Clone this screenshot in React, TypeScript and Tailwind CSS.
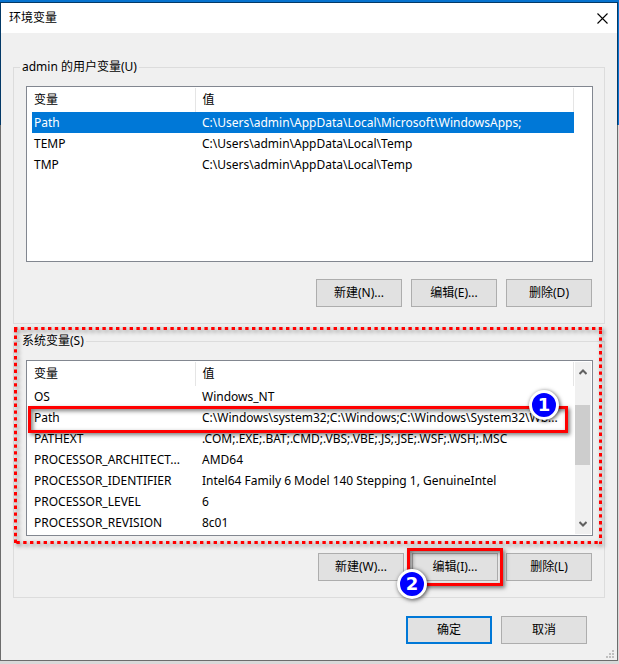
import React from "react";
import clsx from "clsx";

interface EnvVariable {
  name: string;
  value: string;
}

const userVariables: EnvVariable[] = [
  {
    name: "Path",
    value: "C:\\Users\\admin\\AppData\\Local\\Microsoft\\WindowsApps;",
  },
  { name: "TEMP", value: "C:\\Users\\admin\\AppData\\Local\\Temp" },
  { name: "TMP", value: "C:\\Users\\admin\\AppData\\Local\\Temp" },
];

const systemVariables: EnvVariable[] = [
  { name: "OS", value: "Windows_NT" },
  {
    name: "Path",
    value: "C:\\Windows\\system32;C:\\Windows;C:\\Windows\\System32\\Wb...",
  },
  {
    name: "PATHEXT",
    value: ".COM;.EXE;.BAT;.CMD;.VBS;.VBE;.JS;.JSE;.WSF;.WSH;.MSC",
  },
  { name: "PROCESSOR_ARCHITECT...", value: "AMD64" },
  {
    name: "PROCESSOR_IDENTIFIER",
    value: "Intel64 Family 6 Model 140 Stepping 1, GenuineIntel",
  },
  { name: "PROCESSOR_LEVEL", value: "6" },
  { name: "PROCESSOR_REVISION", value: "8c01" },
];

interface DialogButtonProps {
  children: React.ReactNode;
  primary?: boolean;
}

const DialogButton: React.FC<DialogButtonProps> = ({ children, primary }) => (
  <button
    type="button"
    className={clsx(
      "flex h-7 w-[86px] items-center justify-center bg-[#e1e1e1]",
      primary ? "border-2 border-[#0078d7]" : "border border-[#adadad]"
    )}
  >
    {children}
  </button>
);

interface VariableTableProps {
  label: string;
  variables: EnvVariable[];
  selected?: number;
}

const VariableTable: React.FC<VariableTableProps> = ({
  label,
  variables,
  selected,
}) => (
  <table aria-label={label} className="w-full table-fixed border-collapse">
    <colgroup>
      <col className="w-[163px]" />
      <col />
    </colgroup>
    <thead>
      <tr className="h-6 text-left">
        <th className="border-r border-[#e5e5e5] p-0 pl-0.5 font-normal">变量</th>
        <th className="border-r border-[#e5e5e5] p-0 pl-[7px] font-normal">值</th>
      </tr>
    </thead>
    <tbody>
      {variables.map((variable, index) => (
        <tr
          key={variable.name}
          className={clsx(
            "h-[21px]",
            index === selected && "bg-[#0078d7] text-white"
          )}
        >
          <td className="p-0 pl-0.5 whitespace-nowrap">{variable.name}</td>
          <td className="p-0 pl-[7px] whitespace-nowrap">{variable.value}</td>
        </tr>
      ))}
    </tbody>
  </table>
);

const ScrollBar: React.FC = () => (
  <div className="mx-px flex w-4 shrink-0 flex-col bg-[#f0f0f0]">
    <button type="button" aria-label="向上滚动" className="flex h-5 items-center justify-center">
      <svg viewBox="0 0 8 6" className="h-1.5 w-2" fill="none" stroke="#606060" strokeWidth="2">
        <path d="M0.5 5 4 1.5 7.500 5" />
      </svg>
    </button>
    <div className="mt-[23px] mr-px h-[60px] bg-[#cdcdcd]" />
    <button type="button" aria-label="向下滚动" className="mt-auto flex h-5 items-center justify-center">
      <svg viewBox="0 0 8 6" className="h-1.5 w-2" fill="none" stroke="#606060" strokeWidth="2">
        <path d="M0.5 1 4 4.500 7.500 1" />
      </svg>
    </button>
  </div>
);

interface StepBadgeProps {
  step: number;
  className: string;
}

const StepBadge: React.FC<StepBadgeProps> = ({ step, className }) => (
  <span
    className={clsx(
      "absolute flex size-[30px] items-center justify-center rounded-full border-3 border-white bg-[#0000ff] font-['DejaVu_Sans',sans-serif] text-lg leading-none font-bold text-white shadow-[1px_1px_4px_rgba(0,0,0,0.7)]",
      className
    )}
  >
    {step}
  </span>
);

// Red frame drawn over the control a step refers to
const highlightClass =
  "pointer-events-none absolute border-3 border-[#ff0000] shadow-[2px_2px_4px_rgba(0,0,0,0.5),inset_2px_2px_4px_rgba(0,0,0,0.5)]";

interface VariableGroupProps {
  title: string;
  children: React.ReactNode;
}

const VariableGroup: React.FC<VariableGroupProps> = ({ title, children }) => (
  <fieldset className="border border-[#dcdcdc]">
    <legend className="ml-1.5 px-0.5 leading-4">{title}</legend>
    <div className="pt-[11px] pr-[11px] pb-4 pl-3">{children}</div>
  </fieldset>
);

const App: React.FC = () => {
  return (
    <div className="min-h-screen bg-[linear-gradient(#0673cf_125px,#d9d9d9_125px)] pt-0.5 pr-px pb-[3px] font-['Noto_Sans','Noto_Sans_CJK_SC',sans-serif] text-xs text-black">
      <div className="relative border border-black/50 bg-[#f0f0f0] bg-clip-padding">
        <header className="flex h-[30px] items-center justify-between bg-white pr-[9px] pl-2">
          <h1>环境变量</h1>
          <button type="button" aria-label="关闭">
            <svg viewBox="0 0 11 11" className="size-[11px]" fill="none" stroke="#000" strokeWidth="1.1">
              <path d="M0.5 0.5 10.500 10.500M10.500 0.5 0.5 10.500" />
            </svg>
          </button>
        </header>

        <main className="flex flex-col gap-[9px] px-3 pt-[26px]">
          <VariableGroup title="admin 的用户变量(U)">
            <div className="h-[176px] border border-[#828790] bg-white pt-px pr-[18px] pl-[5px]">
              <VariableTable label="用户变量" variables={userVariables} selected={0} />
            </div>
            <div className="mt-[17px] flex justify-end gap-[9px] pr-px">
              <DialogButton>新建(N)...</DialogButton>
              <DialogButton>编辑(E)...</DialogButton>
              <DialogButton>删除(D)</DialogButton>
            </div>
          </VariableGroup>

          <div className="relative">
            <VariableGroup title="系统变量(S)">
              <div className="relative flex h-[176px] border border-[#828790] bg-white py-px pl-[5px]">
                <div className="min-w-0 flex-1">
                  <VariableTable label="系统变量" variables={systemVariables} />
                </div>
                <ScrollBar />
                <div className={clsx(highlightClass, "top-[45px] right-6 left-px h-[27px]")}>
                  <StepBadge step={1} className="-top-[19px] right-1.5" />
                </div>
              </div>
              <div className="mt-[17px] flex justify-end gap-2 pr-px">
                <DialogButton>新建(W)...</DialogButton>
                <div className="relative">
                  <DialogButton>编辑(I)...</DialogButton>
                  <div className={clsx(highlightClass, "-inset-[5px]")}>
                    <StepBadge step={2} className="-bottom-4 -left-[13px]" />
                  </div>
                </div>
                <DialogButton>删除(L)</DialogButton>
              </div>
            </VariableGroup>
            <div className="pointer-events-none absolute -top-1.5 right-[3px] left-px h-[217px]">
              <svg className="size-full drop-shadow-[2px_2px_2px_rgba(0,0,0,0.5)]">
                <rect
                  width="100%"
                  height="100%"
                  fill="none"
                  stroke="#ff0000"
                  strokeWidth="6"
                  strokeDasharray="3.4 3.4"
                />
              </svg>
            </div>
          </div>
        </main>

        <footer className="flex justify-end gap-[9px] pt-[18px] pr-[30px] pb-4">
          <DialogButton primary>确定</DialogButton>
          <DialogButton>取消</DialogButton>
        </footer>

        {/* Resize grip */}
        <svg viewBox="0 0 8 8" className="absolute right-[3px] bottom-0.5 size-2" fill="#bfbfbf">
          <path d="M6 0h2v2H6zM3 3h2v2H3zM6 3h2v2H6zM0 6h2v2H0zM3 6h2v2H3zM6 6h2v2H6z" />
        </svg>
      </div>
    </div>
  );
};

export default App;
